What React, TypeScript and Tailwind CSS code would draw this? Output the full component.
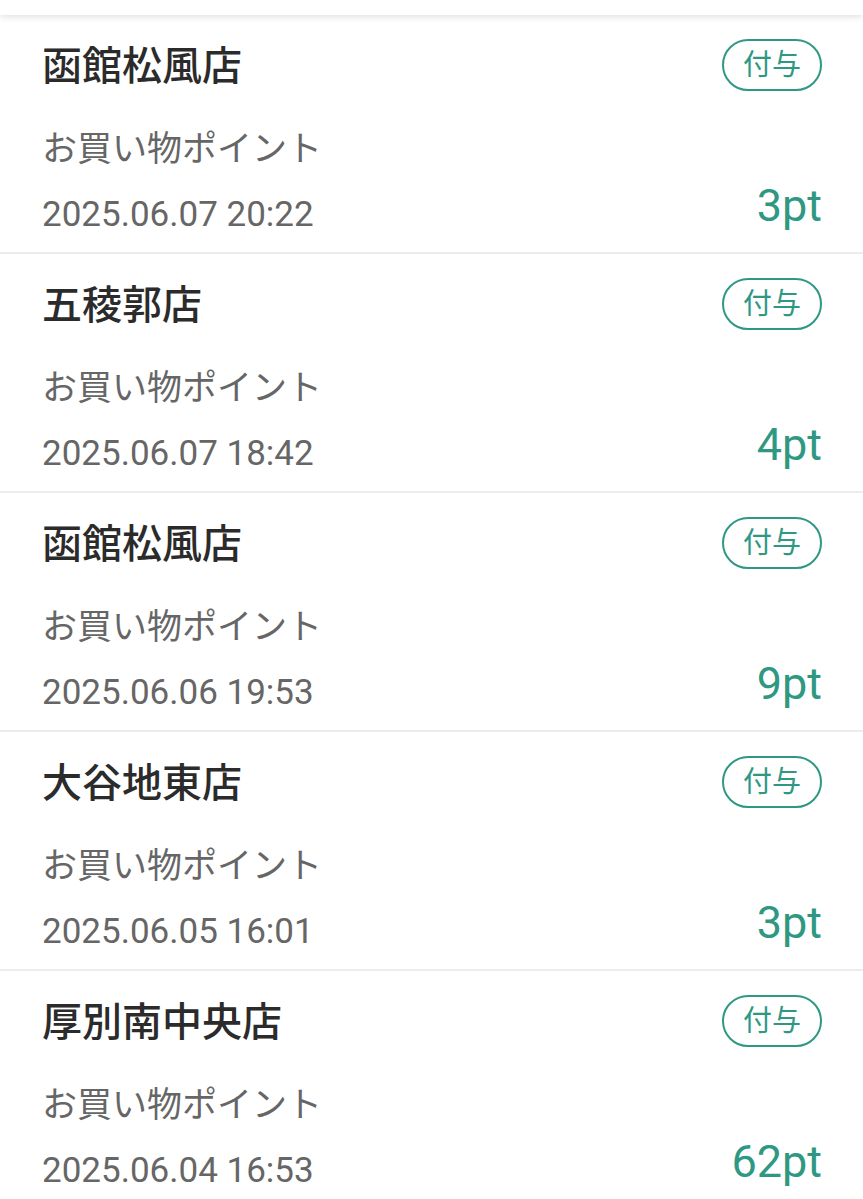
const records = [
  { store: '函館松風店', label: 'お買い物ポイント', date: '2025.06.07 20:22', points: 3 },
  { store: '五稜郭店', label: 'お買い物ポイント', date: '2025.06.07 18:42', points: 4 },
  { store: '函館松風店', label: 'お買い物ポイント', date: '2025.06.06 19:53', points: 9 },
  { store: '大谷地東店', label: 'お買い物ポイント', date: '2025.06.05 16:01', points: 3 },
  { store: '厚別南中央店', label: 'お買い物ポイント', date: '2025.06.04 16:53', points: 62 },
]

const HistoryRow = ({ record }: { record: (typeof records)[number] }) => {
  return (
    <li className="flex flex-col border-b-2 border-[#ececec] pt-[24px] pb-[15px] pl-[42px] pr-[41px]">
      <div className="flex h-[52px] items-center justify-between">
        <span className="mt-[4px] text-[40px] font-medium leading-none text-[#2b2b2b]">
          {record.store}
        </span>
        <span className="flex h-[52px] w-[100px] items-center justify-center rounded-full border-2 border-[#2f9883] text-[29px] leading-none text-[#2f9883]">
          付与
        </span>
      </div>
      <p className="mt-[37px] text-[35px] leading-[44px] text-[#666666]">
        {record.label}
      </p>
      <div className="mt-[3px] flex items-end justify-between">
        <span className="text-[35px] leading-[44px] text-[#666666]">
          {record.date}
        </span>
        <span className="text-[45px] leading-[62px] text-[#2f9883]">
          {record.points}pt
        </span>
      </div>
    </li>
  )
}

export default function App() {
  return (
    <div className="min-h-screen overflow-hidden bg-white font-['Roboto','Noto_Sans_CJK_JP',sans-serif]">
      <div className="relative z-10 h-[15px] bg-white shadow-[0_2px_6px_rgba(0,0,0,0.12)]" />
      <ul>
        {records.map((record, i) => (
          <HistoryRow key={i} record={record} />
        ))}
      </ul>
    </div>
  )
}
